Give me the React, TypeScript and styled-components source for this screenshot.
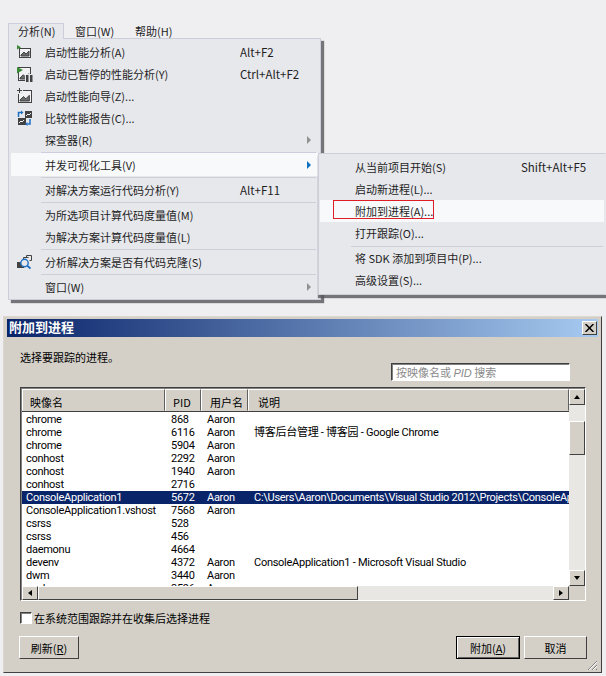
import styled, { createGlobalStyle } from "styled-components";

const CJK = `"Noto Sans CJK SC", sans-serif`;
const UI_FONT = `Roboto, "Noto Sans CJK SC", sans-serif`;

const GlobalStyle = createGlobalStyle`
  html, body {
    margin: 0;
    padding: 0;
    width: 606px;
    height: 676px;
    overflow: hidden;
    background: #efeff2;
  }
`;

const Page = styled.div`
  width: 606px;
  height: 676px;
  display: flex;
  flex-direction: column;
`;

/* ---------- VS menu ---------- */

const MenuArea = styled.div`
  position: relative;
  height: 316px;
  flex: none;
  padding: 23px 0 0 8px;
  box-sizing: border-box;
  font: 11px ${CJK};
  color: #1e1e1e;
`;

const MenuBar = styled.div`
  display: flex;
  height: 16px;
  position: relative;
  z-index: 2;
`;

const MenuTab = styled.div<{ $open?: boolean }>`
  width: ${(p) => (p.$open ? 56 : 60)}px;
  height: ${(p) => (p.$open ? 16 : 15)}px;
  box-sizing: border-box;
  line-height: 15px;
  padding-left: ${(p) => (p.$open ? 9 : 10)}px;
  background: ${(p) => (p.$open ? "#e7e8ec" : "transparent")};
  border: 1px solid ${(p) => (p.$open ? "#ccceDB" : "transparent")};
  border-bottom: none;
`;

const MenuPanel = styled.div`
  width: 313px;
  height: 262px;
  margin-top: -1px;
  box-sizing: border-box;
  border: 1px solid #ccceDB;
  background: #e7e8ec;
  box-shadow: 3px 3px 1px rgba(85, 85, 90, 0.8);
  padding: 2px 1px 0 2px;
`;

const SubPanel = styled.div`
  position: absolute;
  left: 318px;
  top: 153px;
  width: 288px;
  height: 142px;
  box-sizing: border-box;
  border: 1px solid #ccceDB;
  border-right-color: #e7e8ec;
  background: #e7e8ec;
  box-shadow: 0 3px 1px rgba(85, 85, 90, 0.8);
  padding: 2px 1px 0 1px;
  z-index: 3;
`;

const MenuRow = styled.div<{ $hot?: boolean; $tall?: boolean }>`
  height: ${(p) => (p.$tall ? 23 : 22)}px;
  display: flex;
  align-items: center;
  position: relative;
  background: ${(p) => (p.$hot ? "#f8f9fa" : "transparent")};
`;

const IconSlot = styled.div`
  width: 34px;
  flex: none;
  display: flex;
  padding-left: 6px;
  box-sizing: border-box;
`;

const MenuLabel = styled.div`
  width: 195px;
  flex: none;
  white-space: nowrap;
`;

const SubLabel = styled.div`
  width: 166px;
  margin-left: 35px;
  flex: none;
  white-space: nowrap;
`;

const Shortcut = styled.div`
  flex: 1;
  white-space: nowrap;
  font-size: 11.5px;
`;

const Arrow = styled.div<{ $active?: boolean }>`
  position: absolute;
  right: 8px;
  top: 50%;
  margin-top: -4px;
  border-left: 4px solid ${(p) => (p.$active ? "#0e70c0" : "#919191")};
  border-top: 4px solid transparent;
  border-bottom: 4px solid transparent;
`;

const MenuSep = styled.div<{ $gap?: number }>`
  height: 1px;
  margin: 1px 3px ${(p) => p.$gap ?? 1}px 30px;
  background: #ccceDB;
`;

const SubSep = styled.div`
  height: 1px;
  margin: 2px 1px 0 31px;
  background: #ccceDB;
`;

const Callout = styled.div`
  position: absolute;
  left: 333px;
  top: 200px;
  width: 101px;
  height: 19px;
  box-sizing: border-box;
  border: 1px solid #e01c24;
  z-index: 4;
`;

/* ---------- Attach dialog (classic Windows) ---------- */

const Dialog = styled.div`
  width: 599px;
  height: 357px;
  margin-left: 3px;
  box-sizing: border-box;
  background: #d4d0c8;
  border: 1px solid;
  border-color: #dcd8d0 #404040 #404040 #dcd8d0;
  padding: 2px 3px 0 3px;
  display: flex;
  flex-direction: column;
  font: 11px ${UI_FONT};
  color: #000;
  position: relative;
`;

const TitleBar = styled.div`
  height: 18px;
  flex: none;
  display: flex;
  align-items: center;
  justify-content: space-between;
  padding: 0 1px 0 2px;
  background: linear-gradient(90deg, #0a246a, #a6caf0);
`;

const TitleText = styled.div`
  color: #fff;
  font: bold 13px/16px ${CJK};
  margin-top: -3px;
`;

const CloseButton = styled.div`
  width: 15px;
  height: 14px;
  box-sizing: border-box;
  background: #d4d0c8;
  border: 1px solid;
  border-color: #fff #404040 #404040 #fff;
  display: flex;
  align-items: center;
  justify-content: center;
`;

const DialogBody = styled.div`
  flex: 1;
  padding: 12px 11px 0 13px;
  display: flex;
  flex-direction: column;
`;

const Prompt = styled.div`
  height: 14px;
  font: 11px/16px ${CJK};
`;

const SearchRow = styled.div`
  display: flex;
  justify-content: flex-end;
  padding-right: 17px;
`;

const SearchBox = styled.div`
  width: 179px;
  height: 18px;
  box-sizing: border-box;
  background: #fff;
  border: 1px solid;
  border-color: #404040 #fff #fff #404040;
  box-shadow: inset 1px 1px 0 #808080;
  padding-left: 4px;
  font: 11px/16px ${CJK};
  color: #8a8a8a;
  white-space: nowrap;
  i { font-family: "Liberation Sans", sans-serif; }
`;

const ListFrame = styled.div`
  margin-top: 6px;
  width: 566px;
  height: 214px;
  box-sizing: border-box;
  border: 1px solid;
  border-color: #404040 #fff #fff #404040;
  box-shadow: inset 1px 1px 0 #808080;
  padding: 1px 0 0 1px;
  display: grid;
  grid-template-columns: 547px 16px;
  grid-template-rows: 197px 14px;
`;

const ListPane = styled.div`
  background: #fff;
  overflow: hidden;
`;

const COLUMNS = "143px 36px 47px 1fr";

const HeaderRow = styled.div`
  display: grid;
  grid-template-columns: ${COLUMNS};
  height: 23px;
  box-sizing: border-box;
  border-bottom: 1px solid #404040;
  background: #d4d0c8;
`;

const HeaderCell = styled.div<{ $indent: number }>`
  box-sizing: border-box;
  border: 1px solid;
  border-color: #fff #606060 #d4d0c8 #fff;
  padding: 5px 0 0 ${(p) => p.$indent}px;
  font: 11px/15px ${CJK};
  white-space: nowrap;
`;

const Rows = styled.div`
  padding-top: 1px;
`;

const Row = styled.div<{ $selected?: boolean }>`
  display: grid;
  grid-template-columns: ${COLUMNS};
  height: 13px;
  background: ${(p) => (p.$selected ? "#0a246a" : "transparent")};
  color: ${(p) => (p.$selected ? "#fff" : "#000")};
`;

const Cell = styled.div<{ $indent: number }>`
  padding-left: ${(p) => p.$indent}px;
  white-space: nowrap;
  overflow: hidden;
  font: 11px/13px ${UI_FONT};
  letter-spacing: -0.27px;
`;

const VScroll = styled.div`
  display: flex;
  flex-direction: column;
  background: #e8e7e3;
`;

const HScroll = styled.div`
  display: flex;
  background: #e8e7e3;
`;

const ScrollButton = styled.div`
  width: 16px;
  height: 16px;
  flex: none;
  box-sizing: border-box;
  background: #d4d0c8;
  border: 1px solid;
  border-color: #fff #404040 #404040 #fff;
  display: flex;
  align-items: center;
  justify-content: center;
`;

const HScrollButton = styled(ScrollButton)`
  height: 14px;
`;

const Tri = styled.div<{ $dir: "up" | "down" | "left" | "right" }>`
  width: 0;
  height: 0;
  border: 3px solid transparent;
  ${(p) =>
    p.$dir === "up"
      ? "border-top: none; border-bottom: 4px solid #000;"
      : p.$dir === "down"
        ? "border-bottom: none; border-top: 4px solid #000;"
        : p.$dir === "left"
          ? "border-left: none; border-right: 4px solid #000;"
          : "border-right: none; border-left: 4px solid #000;"}
`;

const VThumb = styled.div`
  height: 34px;
  margin-top: 16px;
  flex: none;
  box-sizing: border-box;
  background: #d4d0c8;
  border: 1px solid;
  border-color: #fff #404040 #404040 #fff;
`;

const HThumb = styled.div`
  width: 320px;
  flex: none;
  box-sizing: border-box;
  background: #d4d0c8;
  border: 1px solid;
  border-color: #fff #404040 #404040 #fff;
`;

const Spacer = styled.div`
  flex: 1;
`;

const Corner = styled.div`
  background: #d4d0c8;
`;

const CheckRow = styled.div`
  display: flex;
  align-items: center;
  margin-top: 10px;
  gap: 2px;
  font: 11px/14px ${CJK};
`;

const CheckBox = styled.div`
  width: 12px;
  height: 12px;
  box-sizing: border-box;
  background: #fff;
  border: 1px solid;
  border-color: #404040 #fff #fff #404040;
  box-shadow: inset 1px 1px 0 #808080;
`;

const Buttons = styled.div`
  display: flex;
  gap: 4px;
  margin: 11px 0 0 -1px;
  width: 568px;
`;

const Button = styled.div<{ $primary?: boolean; $w: number }>`
  width: ${(p) => p.$w}px;
  height: 23px;
  box-sizing: border-box;
  background: #d4d0c8;
  border: 1px solid;
  border-color: ${(p) => (p.$primary ? "#000" : "#fff #404040 #404040 #fff")};
  box-shadow: ${(p) =>
    p.$primary ? "inset 1px 1px 0 #fff, inset -1px -1px 0 #606060" : "none"};
  display: flex;
  align-items: center;
  justify-content: center;
  font: 11px ${CJK};
  u { text-underline-offset: 1px; }
`;

const Grip = styled.svg`
  position: absolute;
  right: 3px;
  bottom: 1px;
`;

/* ---------- icons ---------- */

const ink = "#424242";

function ChartBox({ x, y, w, h }: { x: number; y: number; w: number; h: number }) {
  const b = y + h - 2;
  const s = w / 12;
  return (
    <>
      <rect x={x + 0.5} y={y + 0.5} width={w - 1} height={h - 1} fill="#f2f2f4" stroke={ink} />
      <path
        d={`M${x + 2} ${b - 1} l${3 * s} ${-3 * s} l${2 * s} ${2 * s} l${3 * s} ${-3 * s} V${b} H${x + 2} z`}
        fill="#6b6b6b"
        stroke={ink}
        strokeWidth="1"
      />
    </>
  );
}

function StartIcon() {
  return (
    <svg width="16" height="16" viewBox="0 0 16 16">
      <ChartBox x={2} y={4} w={12} h={10} />
      <path d="M0 1l4 2.2L0 5.5z" fill="#388a34" />
    </svg>
  );
}

function PausedIcon() {
  return (
    <svg width="16" height="16" viewBox="0 0 16 16">
      <ChartBox x={1} y={1} w={13} h={14} />
      <path d="M0 1l6 3-6 3.5z" fill="#388a34" />
      <rect x="8" y="8" width="8" height="8" fill="#e7e8ec" />
      <rect x="9" y="9" width="2.5" height="7" fill={ink} />
      <rect x="13" y="9" width="2.5" height="7" fill={ink} />
    </svg>
  );
}

function WizardIcon() {
  return (
    <svg width="16" height="16" viewBox="0 0 16 16">
      <ChartBox x={1} y={2} w={14} h={13} />
      <rect x="0" y="0" width="6" height="6" fill="#e7e8ec" />
      <path d="M2.5 0v5M0 2.5h5" stroke={ink} strokeWidth="1" />
    </svg>
  );
}

function CompareIcon() {
  return (
    <svg width="16" height="16" viewBox="0 0 16 16">
      <rect x="8" y="1" width="7" height="7" fill={ink} />
      <rect x="1" y="8" width="8" height="7" fill={ink} />
      <path d="M9 6l2-2 1 1 2-2M2 13l2-2 1 1 2-2" fill="none" stroke="#f2f2f4" />
      <path d="M1.5 7V2.5H4M10.5 14H13V9" fill="none" stroke="#1b6ec2" strokeWidth="1.5" />
      <path d="M4 0.5v4l2.5-2zM10.5 12v4L8 14z" fill="#1b6ec2" />
    </svg>
  );
}

function CloneIcon() {
  return (
    <svg width="16" height="16" viewBox="0 0 16 16">
      <path d="M9.5 4V1.5h5v5h-2" fill="none" stroke={ink} />
      <path d="M6.5 6V3.5h5" fill="none" stroke={ink} />
      <rect x="0" y="8" width="7" height="6" fill={ink} />
      <circle cx="7.5" cy="9" r="3.7" fill="#e7e8ec" stroke="#1b6ec2" strokeWidth="1.4" />
      <path d="M10 11.5l3.5 3" stroke="#1b6ec2" strokeWidth="1.8" />
    </svg>
  );
}

/* ---------- data ---------- */

const PROCESSES = [
  ["chrome", "868", "Aaron", ""],
  ["chrome", "6116", "Aaron", "博客后台管理 - 博客园 - Google Chrome"],
  ["chrome", "5904", "Aaron", ""],
  ["conhost", "2292", "Aaron", ""],
  ["conhost", "1940", "Aaron", ""],
  ["conhost", "2716", "", ""],
  [
    "ConsoleApplication1",
    "5672",
    "Aaron",
    "C:\\Users\\Aaron\\Documents\\Visual Studio 2012\\Projects\\ConsoleApplication1\\bin",
  ],
  ["ConsoleApplication1.vshost", "7568", "Aaron", ""],
  ["csrss", "528", "", ""],
  ["csrss", "456", "", ""],
  ["daemonu", "4664", "", ""],
  ["devenv", "4372", "Aaron", "ConsoleApplication1 - Microsoft Visual Studio"],
  ["dwm", "3440", "Aaron", ""],
  ["explorer", "3596", "Aaron", ""],
];

export default function App() {
  return (
    <>
      <GlobalStyle />
      <Page>
        <MenuArea>
          <MenuBar>
            <MenuTab $open>分析(N)</MenuTab>
            <MenuTab>窗口(W)</MenuTab>
            <MenuTab>帮助(H)</MenuTab>
          </MenuBar>
          <MenuPanel>
            <MenuRow>
              <IconSlot><StartIcon /></IconSlot>
              <MenuLabel>启动性能分析(A)</MenuLabel>
              <Shortcut>Alt+F2</Shortcut>
            </MenuRow>
            <MenuRow>
              <IconSlot><PausedIcon /></IconSlot>
              <MenuLabel>启动已暂停的性能分析(Y)</MenuLabel>
              <Shortcut>Ctrl+Alt+F2</Shortcut>
            </MenuRow>
            <MenuRow>
              <IconSlot><WizardIcon /></IconSlot>
              <MenuLabel>启动性能向导(Z)...</MenuLabel>
            </MenuRow>
            <MenuRow>
              <IconSlot><CompareIcon /></IconSlot>
              <MenuLabel>比较性能报告(C)...</MenuLabel>
            </MenuRow>
            <MenuRow>
              <IconSlot />
              <MenuLabel>探查器(R)</MenuLabel>
              <Arrow />
            </MenuRow>
            <MenuSep $gap={0} />
            <MenuRow $hot $tall>
              <IconSlot />
              <MenuLabel>并发可视化工具(V)</MenuLabel>
              <Arrow $active />
            </MenuRow>
            <MenuSep />
            <MenuRow>
              <IconSlot />
              <MenuLabel>对解决方案运行代码分析(Y)</MenuLabel>
              <Shortcut>Alt+F11</Shortcut>
            </MenuRow>
            <MenuSep />
            <MenuRow>
              <IconSlot />
              <MenuLabel>为所选项目计算代码度量值(M)</MenuLabel>
            </MenuRow>
            <MenuRow>
              <IconSlot />
              <MenuLabel>为解决方案计算代码度量值(L)</MenuLabel>
            </MenuRow>
            <MenuSep />
            <MenuRow>
              <IconSlot><CloneIcon /></IconSlot>
              <MenuLabel>分析解决方案是否有代码克隆(S)</MenuLabel>
            </MenuRow>
            <MenuSep />
            <MenuRow>
              <IconSlot />
              <MenuLabel>窗口(W)</MenuLabel>
              <Arrow />
            </MenuRow>
          </MenuPanel>
          <SubPanel>
            <MenuRow>
              <SubLabel>从当前项目开始(S)</SubLabel>
              <Shortcut>Shift+Alt+F5</Shortcut>
            </MenuRow>
            <MenuRow>
              <SubLabel>启动新进程(L)...</SubLabel>
            </MenuRow>
            <MenuRow $hot>
              <SubLabel>附加到进程(A)...</SubLabel>
            </MenuRow>
            <MenuRow>
              <SubLabel>打开跟踪(O)...</SubLabel>
            </MenuRow>
            <SubSep />
            <MenuRow>
              <SubLabel>将 SDK 添加到项目中(P)...</SubLabel>
            </MenuRow>
            <MenuRow>
              <SubLabel>高级设置(S)...</SubLabel>
            </MenuRow>
          </SubPanel>
          <Callout />
        </MenuArea>

        <Dialog>
          <TitleBar>
            <TitleText>附加到进程</TitleText>
            <CloseButton>
              <svg width="9" height="8" viewBox="0 0 9 8">
                <path d="M0.5 0l8 8M8.5 0l-8 8" stroke="#000" strokeWidth="1.5" />
              </svg>
            </CloseButton>
          </TitleBar>
          <DialogBody>
            <Prompt>选择要跟踪的进程。</Prompt>
            <SearchRow>
              <SearchBox>
                按映像名或 <i>PID</i> 搜索
              </SearchBox>
            </SearchRow>
            <ListFrame>
              <ListPane>
                <HeaderRow>
                  <HeaderCell $indent={7}>映像名</HeaderCell>
                  <HeaderCell $indent={7}>PID</HeaderCell>
                  <HeaderCell $indent={8}>用户名</HeaderCell>
                  <HeaderCell $indent={9}>说明</HeaderCell>
                </HeaderRow>
                <Rows>
                  {PROCESSES.map((p, i) => (
                    <Row key={i} $selected={i === 6}>
                      <Cell $indent={4}>{p[0]}</Cell>
                      <Cell $indent={6}>{p[1]}</Cell>
                      <Cell $indent={6}>{p[2]}</Cell>
                      <Cell $indent={6}>{p[3]}</Cell>
                    </Row>
                  ))}
                </Rows>
              </ListPane>
              <VScroll>
                <ScrollButton><Tri $dir="up" /></ScrollButton>
                <VThumb />
                <Spacer />
                <ScrollButton><Tri $dir="down" /></ScrollButton>
              </VScroll>
              <HScroll>
                <HScrollButton><Tri $dir="left" /></HScrollButton>
                <HThumb />
                <Spacer />
                <HScrollButton><Tri $dir="right" /></HScrollButton>
              </HScroll>
              <Corner />
            </ListFrame>
            <CheckRow>
              <CheckBox />
              在系统范围跟踪并在收集后选择进程
            </CheckRow>
            <Buttons>
              <Button $w={60}>
                刷新(<u>R</u>)
              </Button>
              <Spacer />
              <Button $w={64} $primary>
                附加(<u>A</u>)
              </Button>
              <Button $w={63}>取消</Button>
            </Buttons>
          </DialogBody>
          <Grip width="12" height="12" viewBox="0 0 12 12">
            <path d="M11 2L2 11M11 6L6 11M11 10L10 11" stroke="#808080" strokeWidth="1" />
            <path d="M11 3L3 11M11 7L7 11" stroke="#fff" strokeWidth="1" />
          </Grip>
        </Dialog>
      </Page>
    </>
  );
}
